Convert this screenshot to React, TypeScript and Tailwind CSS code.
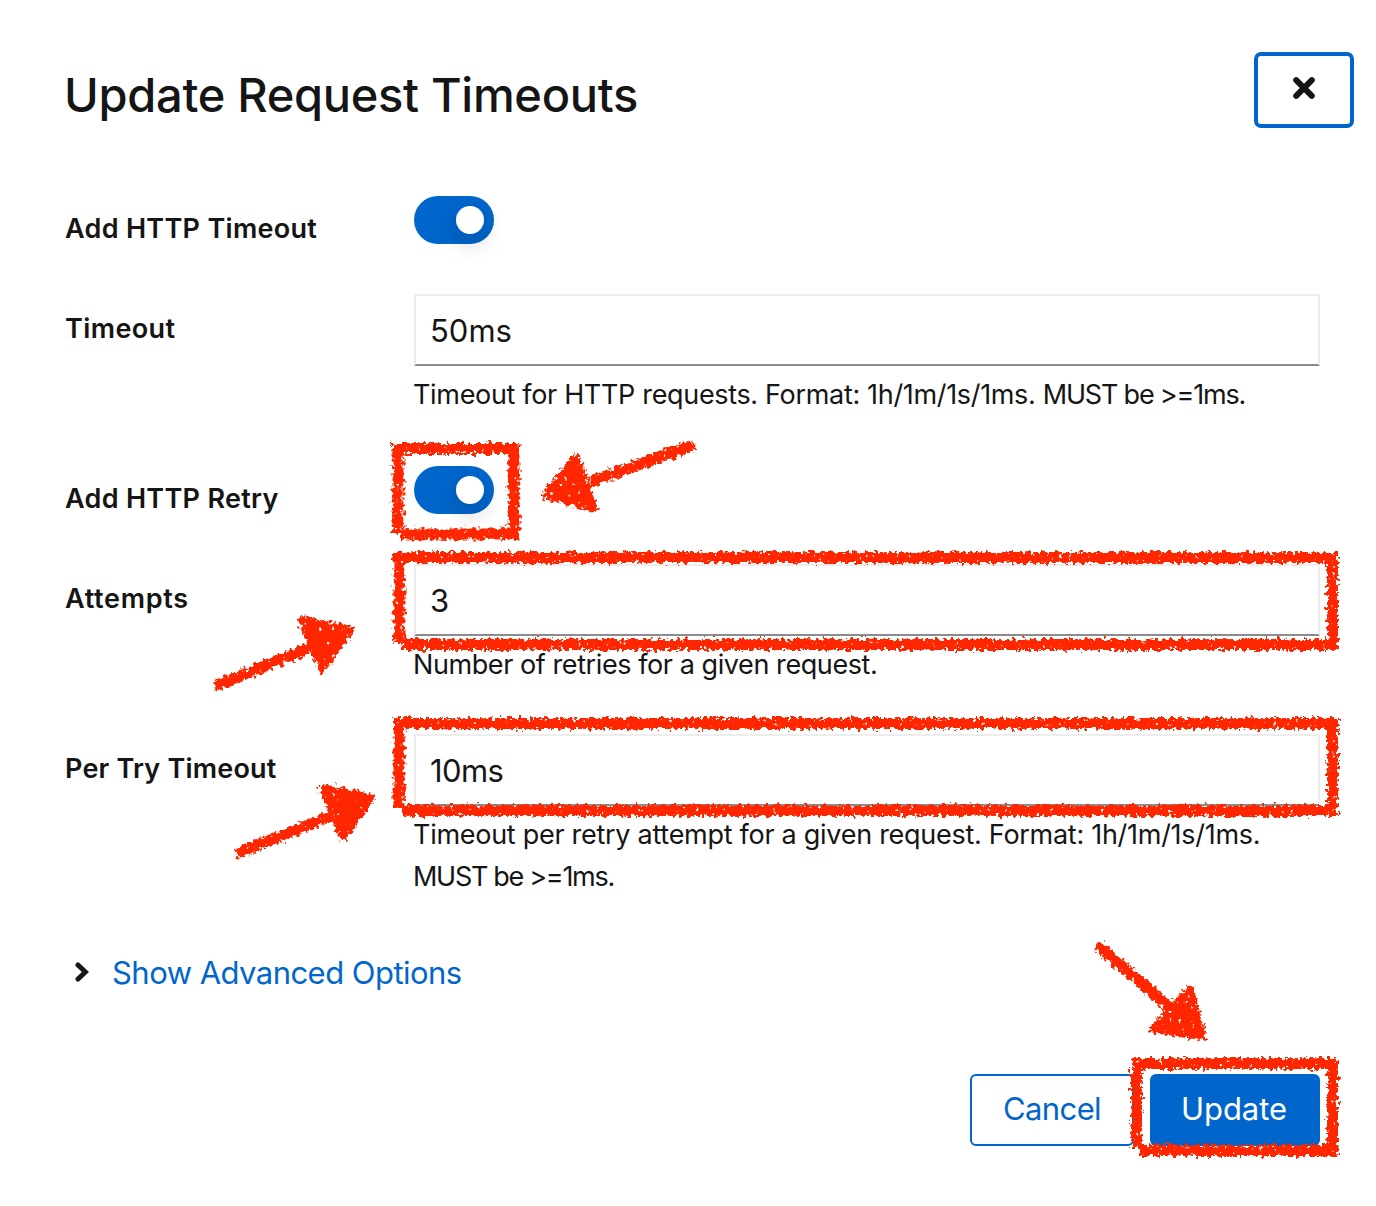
import type { ReactNode } from "react";

function Switch() {
  return (
    <button
      role="switch"
      aria-checked="true"
      className="flex h-12 w-20 items-center justify-end rounded-full bg-[#0066cc] pr-[10px]"
    >
      <span className="size-7 rounded-full bg-white shadow-[0_8px_20px_4px_rgba(3,3,3,0.13)]" />
    </button>
  );
}

function Label({ className = "", children }: { className?: string; children: ReactNode }) {
  return (
    <div className={`w-[349px] shrink-0 text-[27px] leading-[42px] font-semibold ${className}`}>{children}</div>
  );
}

function TextBox({ value, className = "" }: { value: string; className?: string }) {
  return (
    <div
      className={`h-[72px] w-full border-2 border-[#ededed] border-b-[#8a8d90] pl-[14px] text-[31px] leading-[70px] ${className}`}
    >
      {value}
    </div>
  );
}

function Annotations() {
  return (
    <svg
      className="pointer-events-none absolute inset-0"
      width="1376"
      height="1206"
      viewBox="0 0 1376 1206"
      aria-hidden="true"
    >
      <defs>
        <filter
          id="crayon"
          filterUnits="userSpaceOnUse"
          x="0"
          y="0"
          width="1376"
          height="1206"
          colorInterpolationFilters="sRGB"
        >
          <feTurbulence type="fractalNoise" baseFrequency="0.26" numOctaves="2" seed="4" result="grain" />
          <feDisplacementMap
            in="SourceGraphic"
            in2="grain"
            scale="10"
            xChannelSelector="R"
            yChannelSelector="G"
            result="rough"
          />
          <feTurbulence type="fractalNoise" baseFrequency="0.22" numOctaves="2" seed="9" />
          <feColorMatrix values="0 0 0 0 0  0 0 0 0 0  0 0 0 0 0  10 0 0 0 -7" result="holes" />
          <feComposite in="rough" in2="holes" operator="out" result="worn" />
          <feGaussianBlur in="worn" stdDeviation="0.35" />
        </filter>
      </defs>
      <g filter="url(#crayon)" stroke="#ff2600" fill="none" strokeWidth="11">
        <path d="M392 448.5H519M398 443V533M514 443V539M401 534H519" />
        <path d="M393 557.5H1338M399 552V642M1332.5 552V649M402 644.5H1338" />
        <path d="M393 723.5H1338M399 718V808M1332.5 718V815M402 810.5H1338" />
        <path d="M1131 1063.5H1338M1136.5 1058V1148M1332.5 1058V1155M1141 1150.5H1338" />
        <path d="M695 444.5L590 482" />
        <path d="M215 686L310 648" />
        <path d="M236 854L331 816" />
        <path d="M1097 945L1172 1009" />
        <g fill="#ff2600" strokeWidth="8" strokeLinejoin="round">
          <path d="M546 495L576 458L594 508Z" />
          <path d="M302 620L350 630L322 669Z" />
          <path d="M323 788L371 798L343 837Z" />
          <path d="M1190 990L1202 1036L1153 1029Z" />
        </g>
      </g>
    </svg>
  );
}

export default function App() {
  return (
    <main className="relative h-[1206px] w-[1376px] overflow-hidden bg-white pl-[65px] font-['Inter',sans-serif] text-[#151515]">
      <header className="flex h-[196px] justify-between pt-[52px] pr-[22px]">
        <h1 className="-ml-px mt-3 text-[47px] leading-[62px] font-medium tracking-[-0.3px]">Update Request Timeouts</h1>
        <button
          aria-label="Close"
          className="flex h-[76px] w-[100px] items-start justify-center rounded-[7px] border-4 border-[#0066cc] pt-[21px]"
        >
          <svg width="22" height="22" viewBox="0 0 22 22" stroke="#151515" strokeWidth="6" strokeLinecap="round">
            <path d="M3.2 3.2L18.8 18.8M18.8 3.2L3.2 18.8" />
          </svg>
        </button>
      </header>

      <form className="flex w-[1255px] flex-col">
        <div className="flex h-[98px]">
          <Label className="pt-3 tracking-[0.3px]">Add HTTP Timeout</Label>
          <Switch />
        </div>
        <div className="flex h-[172px]">
          <Label className="pt-[14px] tracking-[0.4px]">Timeout</Label>
          <div className="flex-1">
            <TextBox value="50ms" />
            <p className="-ml-px mt-2 text-[27px] leading-[42px] whitespace-nowrap tracking-[-0.33px]">
              Timeout for HTTP requests. Format: 1h/1m/1s/1ms.{" "}
              <span className="tracking-[-1.2px]">MUST be &gt;=1ms.</span>
            </p>
          </div>
        </div>
        <div className="flex h-[98px]">
          <Label className="pt-3 tracking-[0.3px]">Add HTTP Retry</Label>
          <Switch />
        </div>
        <div className="flex h-[170px]">
          <Label className="pt-[14px] tracking-[0.7px]">Attempts</Label>
          <div className="flex-1">
            <TextBox value="3" />
            <p className="-ml-px mt-2 text-[27px] leading-[42px] tracking-[-0.42px]">
              Number of retries for a given request.
            </p>
          </div>
        </div>
        <div className="flex h-[218px]">
          <Label className="pt-[14px] tracking-[0.2px]">Per Try Timeout</Label>
          <div className="flex-1">
            <TextBox value="10ms" className="tracking-[-0.6px]" />
            <p className="-ml-px mt-2 text-[27px] leading-[42px] whitespace-nowrap tracking-[-0.28px]">
              Timeout per retry attempt for a given request. Format: 1h/1m/1s/1ms.
              <br />
              <span className="tracking-[-1.3px]">MUST be &gt;=1ms.</span>
            </p>
          </div>
        </div>
        <button type="button" className="flex h-[42px] items-center self-start pl-[10px] text-[#0066cc]">
          <svg
            className="-mt-[2px]"
            width="14"
            height="20"
            viewBox="0 0 14 20"
            fill="none"
            stroke="#151515"
            strokeWidth="5"
            strokeLinecap="round"
          >
            <path d="M3 3L10.4 10L3 17" />
          </svg>
          <span className="ml-[23px] text-[31px] leading-[42px] tracking-[-0.54px]">Show Advanced Options</span>
        </button>
      </form>

      <footer className="mt-[80px] flex w-[1255px] justify-end gap-4">
        <button className="h-[72px] w-[164px] rounded-md border-2 border-[#0066cc] pb-[2px] text-[31px] tracking-[-0.6px] text-[#0066cc]">
          Cancel
        </button>
        <button className="h-[72px] w-[170px] rounded-md bg-[#0066cc] pr-[2px] pb-[2px] text-[31px] tracking-[-0.1px] text-white">
          Update
        </button>
      </footer>
      <Annotations />
    </main>
  );
}
